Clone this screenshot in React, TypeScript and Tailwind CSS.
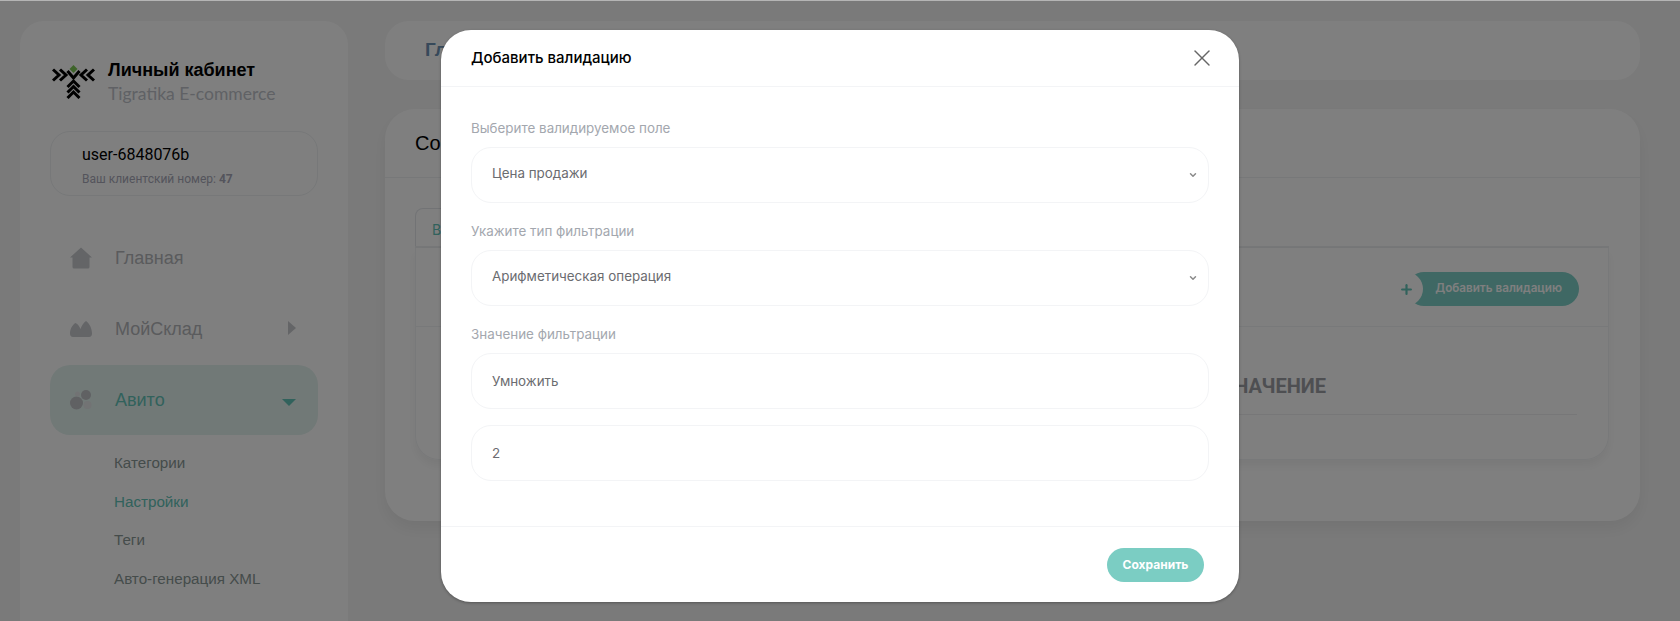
import { X, ChevronDown, Plus } from "lucide-react";

const inter = "font-['Inter',sans-serif]";
const arial = "font-['Liberation_Sans',Arial,sans-serif]";

function Logo() {
  return (
    <svg width="44" height="34" viewBox="0 0 44 34" fill="none" className="shrink-0">
      <g stroke="#000" strokeWidth="3">
        <path d="M1 4.500 7 10 1 15.500M8 4.500 14 10 8 15.500" />
        <path d="M42 4.500 36 10 42 15.500M35 4.500 29 10 35 15.500" />
        <path d="M15.500 6 21.500 13 27.500 6" />
        <path d="M15.500 22 21.500 16 27.500 22M15.500 27.500 21.500 21.500 27.500 27.500M15.500 33 21.500 27 27.500 33" />
      </g>
      <path d="M21.500 0 25.500 4 21.500 8 17.500 4Z" fill="#7dc855" />
    </svg>
  );
}

function HomeIcon() {
  return (
    <svg width="22" height="22" viewBox="0 0 22 22" className="shrink-0">
      <path d="M11 0.500 22 10.500H19.500V20a1.500 1.500 0 0 1-1.500 1.500H4A1.500 1.500 0 0 1 2.500 20V10.500H0Z" fill="#c8cace" />
    </svg>
  );
}

function StoreIcon() {
  return (
    <svg width="22" height="16" viewBox="0 0 22 16" className="shrink-0">
      <path d="M0 12.500C0 8.500 2 4 5.500 2 8 3 9.500 5.500 10.500 8 11.500 5 13.500 1.500 16 0c3.500 2.500 6 7.500 6 12.500 0 2-1 3.500-3 3.500H3c-2 0-3-1.500-3-3.500Z" fill="#c8cace" />
    </svg>
  );
}

function AvitoIcon() {
  return (
    <svg width="22" height="20" viewBox="0 0 22 20" className="shrink-0">
      <circle cx="6.500" cy="13" r="6.500" fill="#c0c2c6" />
      <circle cx="16" cy="5" r="5" fill="#c0c2c6" />
      <circle cx="17.500" cy="15" r="4" fill="#e4e6e8" />
      <circle cx="7.500" cy="4" r="2.500" fill="#e4e6e8" />
    </svg>
  );
}

function NavItem({ icon, label, active, arrow }: { icon: React.ReactNode; label: string; active?: boolean; arrow?: "right" | "down" }) {
  return (
    <div className={`flex h-[70px] items-center rounded-[20px] pl-5 pr-[22px] ${active ? "bg-[#e3f2ef]" : ""}`}>
      <div className="flex w-[45px] items-center">{icon}</div>
      <span className={`${arial} text-[18px] ${active ? "text-[#62c4b8]" : "text-[#b4b6ba]"}`}>{label}</span>
      {arrow === "right" && <div className="ml-auto -mt-[2px] h-0 w-0 border-y-[7px] border-l-[8px] border-y-transparent border-l-[#c8cace]" />}
      {arrow === "down" && <div className="ml-auto mt-1 h-0 w-0 border-x-[7px] border-t-[7px] border-x-transparent border-t-[#62c4b8]" />}
    </div>
  );
}

function Field({ label, value, select }: { label?: string; value: string; select?: boolean }) {
  return (
    <div className="flex flex-col">
      {label && <div className="mb-[9px] h-[20px] text-[13.400px] leading-[20px] text-[#a3a7ae]">{label}</div>}
      <div className="flex h-[56px] items-center rounded-[20px] border border-[#f3f4f6] pl-[20px] pr-[10px] text-[13.400px] text-[#6b6c70]">
        <span className={select ? "pb-[3px]" : ""}>{value}</span>
        {select && <ChevronDown size={10} strokeWidth={3.500} className="ml-auto text-[#8a8a8a]" />}
      </div>
    </div>
  );
}

function Sidebar() {
  return (
    <aside className="flex h-[640px] w-[328px] shrink-0 flex-col rounded-[24px] bg-white px-[30px] pt-[37px]">
      <div className="flex items-center gap-[12px] pl-[2px]">
        <Logo />
        <div className="flex flex-col">
          <span className={`${arial} text-[18px] font-bold leading-[24px] text-black`}>Личный кабинет</span>
          <span className="font-['Lato',sans-serif] text-[17.500px] leading-[24px] text-[#c0c3ca]">Tigratika E-commerce</span>
        </div>
      </div>
      <div className="mt-[25px] flex h-[65px] flex-col justify-center rounded-[20px] border border-[#eef0f2] pl-[31px] pt-[2px]">
        <span className="font-['Roboto',sans-serif] text-[16px] leading-[24px] text-black">user-6848076b</span>
        <span className="mt-[4px] font-['Roboto',sans-serif] text-[12px] leading-[16px] text-[#a8a9b8]">
          Ваш клиентский номер: <b>47</b>
        </span>
      </div>
      <nav className="mt-[27px] flex flex-col gap-[1px]">
        <NavItem icon={<HomeIcon />} label="Главная" />
        <NavItem icon={<StoreIcon />} label="МойСклад" arrow="right" />
        <NavItem icon={<AvitoIcon />} label="Авито" active arrow="down" />
      </nav>
      <div className={`${arial} mt-[9px] flex flex-col pl-[64px] text-[15.200px] text-[#8a9896]`}>
        <span className="h-[38.500px] leading-[38px]">Категории</span>
        <span className="h-[38.500px] leading-[38px] text-[#62c4b8]">Настройки</span>
        <span className="h-[38.500px] leading-[38px]">Теги</span>
        <span className="h-[38.500px] leading-[38px]">Авто-генерация XML</span>
      </div>
    </aside>
  );
}

function Main() {
  return (
    <main className="flex w-[1255px] flex-col gap-[29px]">
      <div className="flex h-[59px] items-center rounded-[24px] bg-white pl-[40px]">
        <span className={`${arial} text-[19px] font-bold text-[#6f92b4]`}>Гл</span>
      </div>
      <section className="flex h-[412px] flex-col rounded-[30px] bg-white shadow-[0_8px_16px_rgba(0,0,0,0.06)]">
        <div className="flex h-[69px] items-center border-b border-[#eef0f2] pl-[30px] text-[20px] text-black">
          <span className={arial}>Со</span>
        </div>
        <div className="flex flex-1 flex-col pl-[30px] pr-[31px] pt-[30px]">
          <div className="flex h-[40px] border-b-2 border-[#eceef0]">
            <div className={`${inter} w-[120px] rounded-t-[8px] border border-b-0 border-[#e5e7eb] pl-[16px] pt-[10px] text-[14px] text-[#62c4b8]`}>В</div>
          </div>
          <div className="flex h-[212px] flex-col rounded-b-[24px] border border-t-0 border-[#f1f2f4] shadow-[0_6px_10px_rgba(0,0,0,0.05)]">
            <div className="flex h-[79px] items-center justify-end border-b border-[#f1f2f4] pr-[29px] pt-[4px]">
              <div className="relative flex h-[34px] items-center rounded-full bg-[#7ed0c8] pl-[28px] pr-[17px]">
                <div className="absolute -left-[18px] flex h-[34px] w-[34px] items-center justify-center rounded-full bg-white">
                  <Plus size={15} strokeWidth={3.500} className="text-[#62c4b8]" />
                </div>
                <span className={`${inter} relative text-[11.700px] font-semibold text-white`}>Добавить валидацию</span>
              </div>
            </div>
            <div className="flex flex-col items-end pr-[31px]">
              <div className="flex h-[88px] w-[700px] items-end justify-end border-b border-[#eeeff1] pb-[16px]">
                <span className="mr-[251px] font-['Roboto',sans-serif] text-[20px] font-bold leading-[24px] text-[#9c9ea4]">ЗНАЧЕНИЕ</span>
              </div>
            </div>
          </div>
        </div>
      </section>
    </main>
  );
}

function Modal() {
  return (
    <div className={`${inter} flex h-[572px] w-[798px] flex-col rounded-[30px] bg-white shadow-[0_1px_3px_rgba(0,0,0,0.3)]`}>
      <div className="flex h-[57px] items-center justify-between border-b border-[#f3f4f6] pl-[30px] pr-[23px]">
        <span className="text-[15px] font-medium text-black">Добавить валидацию</span>
        <X size={28} strokeWidth={1.200} className="text-[#666]" />
      </div>
      <div className="flex flex-1 flex-col gap-[16px] pl-[30px] pr-[30px] pt-[31px]">
        <div className="flex flex-col gap-[18px]">
          <Field label="Выберите валидируемое поле" value="Цена продажи" select />
          <Field label="Укажите тип фильтрации" value="Арифметическая операция" select />
          <Field label="Значение фильтрации" value="Умножить" />
        </div>
        <Field value="2" />
      </div>
      <div className="flex h-[76px] items-center justify-end border-t border-[#f3f4f6] pr-[35px]">
        <button className="h-[34px] w-[97px] rounded-full bg-[#7bcdc3] text-[12px] font-bold text-white">Сохранить</button>
      </div>
    </div>
  );
}

export default function App() {
  return (
    <div className="relative h-[621px] w-[1680px] overflow-hidden bg-[#f5f5f5]">
      <div className="flex gap-[37px] pl-[20px] pt-[21px]">
        <Sidebar />
        <Main />
      </div>
      <div className="absolute inset-0 border-t border-t-[#b5b5b5] bg-black/50 pl-[441px] pt-[29px]">
        <Modal />
      </div>
    </div>
  );
}
